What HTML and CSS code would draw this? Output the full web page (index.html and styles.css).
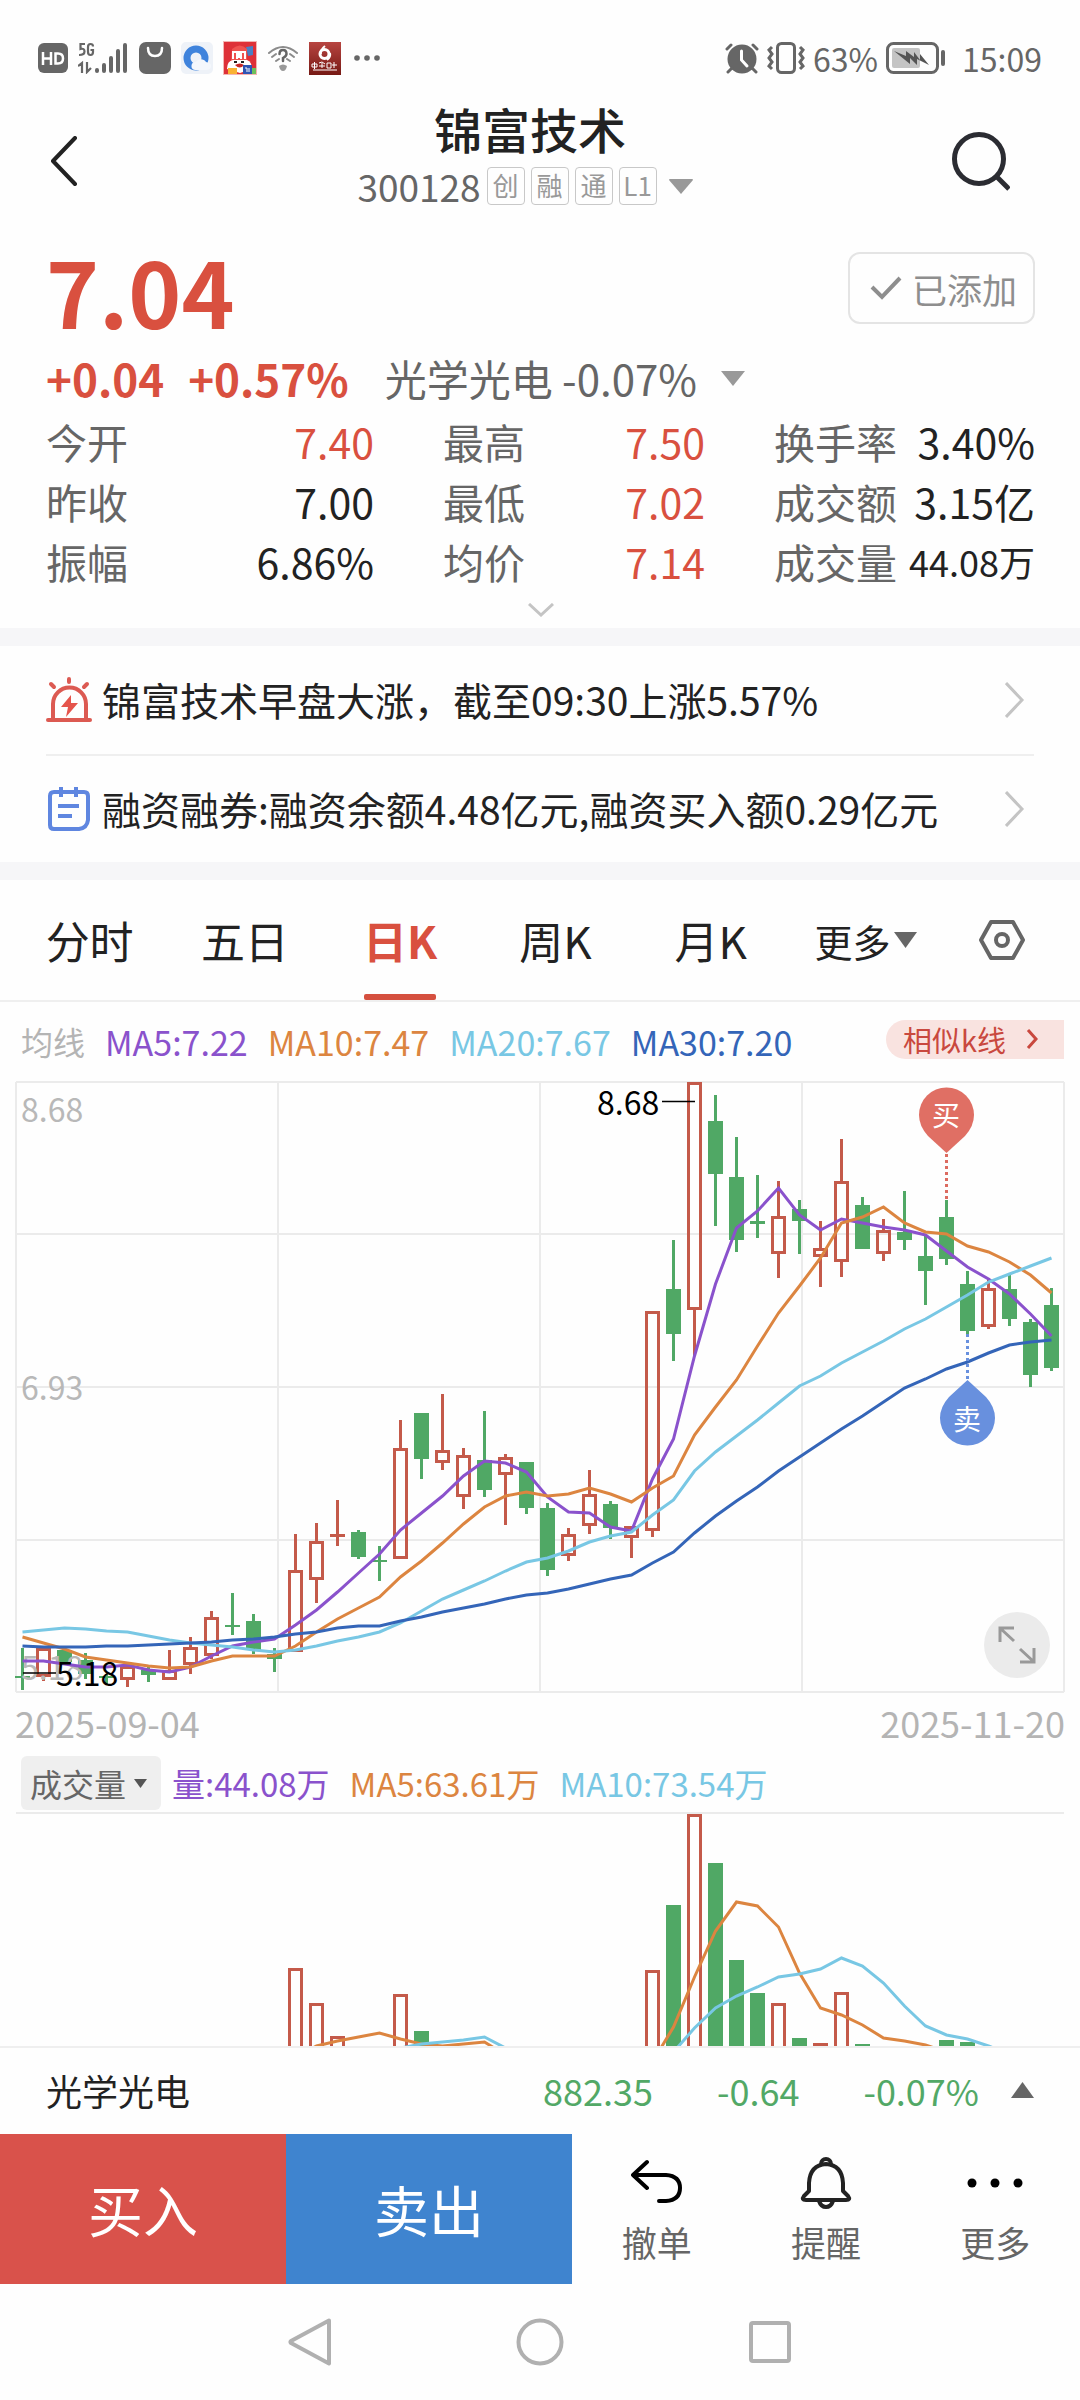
FILE: index.html
```html
<!DOCTYPE html>
<html lang="zh-CN">
<head>
  <meta charset="UTF-8" />
  <meta name="viewport" content="width=device-width, initial-scale=1.0"/>
  <title>锦富技术 300128</title>
  <link rel="stylesheet" href="styles.css">
</head>
<body>

  <div class="status-bar">
    <div class="status-left">
      <svg width="30" height="30" viewBox="0 0 30 30"><rect width="30" height="30" rx="6" fill="#666"/><path d="M5 9v13M13 9v13M5 15.500h8M17.500 10.500v10h2.500q5 0 5-5t-5-5z" fill="none" stroke="#fff" stroke-width="2.500"/></svg>
      <svg width="51" height="32" viewBox="0 0 51 32"><g fill="none" stroke="#666" stroke-width="2.200"><path d="M7 2H2.500v5q4-1 4 2.500T1 13M15 4.500q0-2.500-2.500-2.500T10 5v5q0 3 2.500 3t2.500-3V8h-2.500M0 24l4-3v10M9 20v10l4-4"/></g><g stroke="#666" stroke-width="4" stroke-linecap="round"><path d="M19 28v1M26 23v6M33 16v13M40 9v20M47 3v26"/></g></svg>
      <svg width="32" height="32" viewBox="0 0 32 32"><rect width="32" height="32" rx="7" fill="#666"/><path d="M9 6q0 8 7 8t7-8" fill="none" stroke="#fff" stroke-width="2.500" stroke-linecap="round"/></svg>
      <svg width="32" height="32" viewBox="0 0 32 32"><rect width="32" height="32" rx="5" fill="#eef2f8"/><circle cx="15" cy="16" r="9" fill="none" stroke="#3f83dc" stroke-width="7"/><path d="M14 28a4 4 0 0 1 1-8 6 6 0 0 1 10 0q6 1 5 5-1 3-5 3z" fill="#f4f7fc"/></svg>
      <svg width="34" height="34" viewBox="0 0 34 34"><rect width="34" height="34" fill="#f3b6b3"/><rect x="1" y="1" width="32" height="32" fill="#de3138"/><path d="M23 6l7-1v9l-5 1z" fill="#4a7fc4"/><path d="M9 8q8-7 15 0v12H8z" fill="#ef5350"/><path d="M10 18v-7h4v7M16 10v7M18 18v-7h4v7" fill="none" stroke="#fff" stroke-width="2"/><path d="M4 28q0-8 6-9h14q5 2 5 9l-12 4z" fill="#fff"/><path d="M12 24q5-3 9 0-4 5-9 0z" fill="#c62828"/><path d="M11 21h3M18 21h3" stroke="#222" stroke-width="2"/><rect x="5" y="27" width="9" height="6" fill="#f9b233"/><rect x="20" y="24" width="9" height="9" fill="#2f55b5"/><rect x="29" y="27" width="4" height="6" fill="#6cc15c"/><path d="M22 27h2v4M26 27v4" stroke="#fff" fill="none"/></svg>
      <svg width="32" height="26" viewBox="0 0 32 26"><g fill="none" stroke="#8b8b8b" stroke-width="2" stroke-linecap="round"><path d="M2 8Q16-4 30 8M5 12l4-3M27 12l-4-3M9 16l3-2M23 16l-3-2"/><path d="M12.500 9q0-4 3.500-4t3.500 4q0 2-3.500 4v3" stroke="#666" stroke-width="2.500"/></g><path d="M12 21q4-3 8 0-1 5-4 5t-4-5z" fill="#999"/></svg>
      <svg width="32" height="33" viewBox="0 0 32 33"><defs><linearGradient id="app" x2="0" y2="1"><stop stop-color="#b84541"/><stop offset="1" stop-color="#761914"/></linearGradient></defs><rect width="32" height="33" fill="url(#app)"/><circle cx="15.500" cy="12" r="4.500" fill="none" stroke="#fff" stroke-width="3"/><path d="M16 4q-5 4-4 8M18 18q4-3 3-7" stroke="#fff" stroke-width="2" fill="none"/><path d="M3 22h5v3H3zM5.500 20v7M10 21l3-1 3 2M10 24h6M13 21v5M18 21h4v5h-4zM25 20v6M23 23h5M4 28h24" fill="none" stroke="#fff"/></svg>
      <svg class="dots" width="26" height="6" viewBox="0 0 26 6"><g fill="#666"><circle cx="3" cy="3" r="2.800"/><circle cx="13" cy="3" r="2.800"/><circle cx="23" cy="3" r="2.800"/></g></svg>
    </div>
    <div class="status-right">
      <svg width="34" height="32" viewBox="0 0 34 32"><circle cx="17" cy="17" r="14.500" fill="#666"/><path d="M2 7l4-4M32 7l-4-4M3 30l4-4M31 30l-4-4" stroke="#666" stroke-width="3" stroke-linecap="round"/><path d="M16.500 9v9l5.500 6" fill="none" stroke="#fff" stroke-width="3" stroke-linecap="round"/></svg>
      <svg width="38" height="32" viewBox="0 0 38 32"><g fill="none" stroke="#666" stroke-width="3"><rect x="10.500" y="1.500" width="17" height="29" rx="4"/><path d="M5 5l-3 3 3 4-3 4 3 4-3 4 3 3M33 5l3 3-3 4 3 4-3 4 3 4-3 3"/></g></svg>
      <span>63%</span>
      <svg width="60" height="32" viewBox="0 0 60 32"><rect x="1.500" y="1.500" width="50" height="29" rx="6" fill="none" stroke="#666" stroke-width="3"/><rect x="6" y="6" width="28" height="20" rx="2" fill="#c4c4c4"/><path d="M8 9l12 5v-5l8 6v-5l6 8v-6l9 11-12-6v6l-7-7v6z" fill="#555"/><rect x="55" y="8" width="4" height="16" rx="2" fill="#666"/></svg>
      <time class="clock">15:09</time>
    </div>
  </div>

  <header class="header">
    <button class="icon-btn" aria-label="返回">
      <svg width="28" height="50" viewBox="0 0 28 50"><path d="M25 2L3 25l22 23" fill="none" stroke="#222" stroke-width="4" stroke-linecap="round" stroke-linejoin="round"/></svg>
    </button>
    <div class="header-title">
      <h1>锦富技术</h1>
      <div class="code-row">
        <span class="code">300128</span>
        <span class="badge">创</span>
        <span class="badge">融</span>
        <span class="badge">通</span>
        <span class="badge">L1</span>
        <svg class="code-arrow" width="24" height="15" viewBox="0 0 24 15"><path d="M0 1q0-1 1-1h22q1 0 1 1L12 15z" fill="#999"/></svg>
      </div>
    </div>
    <button class="icon-btn search" aria-label="搜索">
      <svg width="58" height="60" viewBox="0 0 58 60"><circle cx="27" cy="28" r="24.500" fill="none" stroke="#2b2c32" stroke-width="5"/><path d="M44 45l13 13" stroke="#2b2c32" stroke-width="5"/></svg>
    </button>
  </header>

  <section class="quote">
    <div class="price-row">
      <strong class="price">7.04</strong>
      <button class="added"><svg width="32" height="24" viewBox="0 0 32 24"><path d="M2 11l10 10L30 2" fill="none" stroke="#8e8e8e" stroke-width="4"/></svg>已添加</button>
    </div>
    <div class="change-row">
      <strong>+0.04</strong>
      <strong>+0.57%</strong>
      <a href="#sector">光学光电 <span>-0.07%</span></a>
      <svg width="24" height="15" viewBox="0 0 24 15"><path d="M0 0h24L12 15z" fill="#999"/></svg>
    </div>
    <dl class="stats">
      <div><dt>今开</dt><dd class="up">7.40</dd></div>
      <div><dt>最高</dt><dd class="up">7.50</dd></div>
      <div><dt>换手率</dt><dd>3.40%</dd></div>
      <div><dt>昨收</dt><dd>7.00</dd></div>
      <div><dt>最低</dt><dd class="up">7.02</dd></div>
      <div><dt>成交额</dt><dd>3.15亿</dd></div>
      <div><dt>振幅</dt><dd>6.86%</dd></div>
      <div><dt>均价</dt><dd class="up">7.14</dd></div>
      <div><dt>成交量</dt><dd class="small">44.08万</dd></div>
    </dl>
    <button class="expand" aria-label="展开"><svg width="26" height="14" viewBox="0 0 26 14"><path d="M1 1l12 11L25 1" fill="none" stroke="#c4c4c4" stroke-width="3"/></svg></button>
  </section>

  <section class="news">
    <a class="news-item" href="#">
      <svg width="46" height="46" viewBox="0 0 46 46"><g fill="none" stroke="#dc5a52" stroke-width="4" stroke-linecap="round"><path d="M2 43h42"/><path d="M7 43V27a16.500 16.500 0 0 1 33 0v16"/><path d="M23 2v3M5 7l3 3M41 7l-3 3"/></g><path d="M25 18l-10 12h7l-2 10 12-14h-7z" fill="#e5544b"/></svg>
      <span>锦富技术早盘大涨，截至09:30上涨5.57%</span>
      <svg class="go" width="20" height="36" viewBox="0 0 20 36"><path d="M1 1l16 17L1 35" fill="none" stroke="#c4c4c4" stroke-width="3"/></svg>
    </a>
    <a class="news-item" href="#">
      <svg width="46" height="46" viewBox="0 0 46 46"><g fill="none" stroke="#5f86e0" stroke-width="4"><path d="M8 6h30q4 0 4 4v24q-1 8-9 9H8q-4 0-4-4V10q0-4 4-4zM15 1v10M30 1v10M12 20h21M12 30h14"/></g></svg>
      <span>融资融券:融资余额4.48亿元,融资买入额0.29亿元</span>
      <svg class="go" width="20" height="36" viewBox="0 0 20 36"><path d="M1 1l16 17L1 35" fill="none" stroke="#c4c4c4" stroke-width="3"/></svg>
    </a>
  </section>

  <nav class="tabs">
    <button>分时</button>
    <button>五日</button>
    <button class="active">日K</button>
    <button>周K</button>
    <button>月K</button>
    <button class="more">更多<svg width="23" height="16" viewBox="0 0 23 16"><path d="M0 0h23L11.500 16z" fill="#666"/></svg></button>
    <button aria-label="设置"><svg width="48" height="42" viewBox="0 0 48 42"><g fill="none" stroke="#666" stroke-width="4"><path d="M13 3h22l10 18-10 18H13L3 21z" stroke-linejoin="round"/><circle cx="24" cy="21" r="6"/></g></svg></button>
  </nav>

  <div class="legend">
    <span class="ma-name">均线</span>
    <span class="ma5">MA5:7.22</span>
    <span class="ma10">MA10:7.47</span>
    <span class="ma20">MA20:7.67</span>
    <span class="ma30">MA30:7.20</span>
    <a class="similar" href="#">相似k线<svg width="12" height="22" viewBox="0 0 12 22"><path d="M2 2l8 9-8 9" fill="none" stroke="#c9483e" stroke-width="3"/></svg></a>
  </div>

  <div class="chart">
    <svg id="kline" viewBox="0 0 1080 614"></svg>
    <button class="fullscreen" aria-label="全屏"><svg width="38" height="38" viewBox="0 0 38 38"><path d="M2 16V2h14M3 3l13 12M22 36h14V22M35 35L22 23" fill="none" stroke="#999" stroke-width="3"/></svg></button>
  </div>
  <div class="dates"><time>2025-09-04</time><time>2025-11-20</time></div>

  <div class="legend volume-legend">
    <label class="indicator">
      <select aria-label="指标"><option>成交量</option></select>
      <svg width="13" height="9" viewBox="0 0 13 9"><path d="M0 0h13L6.500 9z" fill="#555"/></svg>
    </label>
    <span class="ma5">量:44.08万</span>
    <span class="ma10">MA5:63.61万</span>
    <span class="ma20">MA10:73.54万</span>
  </div>
  <svg id="volume" class="volume" viewBox="0 0 1080 234"></svg>

  <footer class="footer">
    <div class="sector" id="sector">
      <span class="sector-name">光学光电</span>
      <span>882.35</span>
      <span>-0.64</span>
      <span>-0.07%</span>
      <svg width="23" height="16" viewBox="0 0 23 16"><path d="M11.500 0L23 16H0z" fill="#666"/></svg>
    </div>
    <div class="actions">
      <button class="buy">买入</button>
      <button class="sell">卖出</button>
      <div class="tools">
        <button>
          <svg width="52" height="54" viewBox="0 0 52 54"><path d="M16 6L2 19l14 13M3 19h32q14 1 14 13t-14 13h-7" fill="none" stroke="#000" stroke-width="4" stroke-linecap="round" stroke-linejoin="round"/></svg>
          撤单
        </button>
        <button>
          <svg width="52" height="54" viewBox="0 0 52 54"><g fill="none" stroke="#222" stroke-width="4" stroke-linejoin="round"><path d="M21 8a5 5 0 1 1 10 0"/><path d="M9 35V27Q10 9 26 8q16 1 17 19v8l5 5q3 4-2 4H6q-5 0-2-4z"/><path d="M19 45q2 6 7 6t7-6"/></g></svg>
          提醒
        </button>
        <button>
          <svg width="56" height="54" viewBox="0 0 56 54"><circle cx="5" cy="27" r="4.500"/><circle cx="28" cy="27" r="4.500"/><circle cx="51" cy="27" r="4.500"/></svg>
          更多
        </button>
      </div>
    </div>
  </footer>

  <div class="system-nav">
    <button aria-label="返回"><svg width="46" height="48" viewBox="0 0 46 48"><path d="M42 2.500L4 23q-1 1 0 2l38 20.500z" fill="none" stroke="#b0b0b0" stroke-width="4" stroke-linejoin="round"/></svg></button>
    <button aria-label="主页"><svg width="48" height="48" viewBox="0 0 48 48"><circle cx="24" cy="24" r="21.500" fill="none" stroke="#b0b0b0" stroke-width="4"/></svg></button>
    <button aria-label="最近"><svg width="44" height="44" viewBox="0 0 44 44"><rect x="3" y="3" width="38" height="38" rx="2" fill="none" stroke="#b0b0b0" stroke-width="4"/></svg></button>
  </div>

  <script src="chart.js"></script>
</body>
</html>
```

FILE: styles.css
```css
* {
  box-sizing: border-box;
}
body {
  margin: 0;
  font-family: "Noto Sans CJK SC", "Noto Sans", sans-serif;
  background: #fefefe;
  color: #222;
}
button, select {
  font: inherit;
  color: inherit;
  background: none;
  border: none;
  padding: 0;
  cursor: pointer;
}
a {
  color: inherit;
  text-decoration: none;
}
svg {
  display: block;
  flex-shrink: 0;
}

/* status bar */
.status-bar {
  display: flex;
  justify-content: space-between;
  height: 100px;
  padding: 16px 38px 0;
  color: #666;
  font-size: 32px;
}
.status-left, .status-right {
  display: flex;
  align-items: center;
  gap: 10px;
}
.status-right {
  gap: 8px;
}
.dots {
  margin-left: 3px;
}
.clock {
  margin-left: 8px;
}

/* header */
.header {
  display: grid;
  grid-template-columns: 80px 1fr 80px;
  align-items: center;
  padding: 0 70px 0 50px;
}
.icon-btn {
  display: flex;
  padding-top: 16px;
}
.search {
  justify-content: flex-end;
}
.header-title {
  text-align: center;
}
.header h1 {
  margin: 0 0 10px;
  font-size: 48px;
  font-weight: 500;
  line-height: 56px;
}
.code-row {
  display: flex;
  justify-content: center;
  align-items: center;
  gap: 6px;
  height: 40px;
  padding-right: 10px;
  color: #666;
}
.code {
  font-size: 37px;
  line-height: 36px;
}
.badge {
  width: 38px;
  height: 38px;
  border: 1px solid #c8c8c8;
  border-radius: 4px;
  color: #999;
  font-size: 26px;
  line-height: 34px;
}
.code-arrow {
  margin-left: 6px;
}

/* quote */
.quote {
  padding: 46px 45px 6px 46px;
}
.price-row {
  display: flex;
  justify-content: space-between;
  align-items: flex-start;
  color: #d9503f;
}
.price {
  font-size: 90px;
  line-height: 76px;
}
.added {
  display: flex;
  align-items: center;
  gap: 10px;
  height: 72px;
  padding: 0 16px 0 20px;
  border: 2px solid #e4e4e4;
  border-radius: 12px;
  color: #8e8e8e;
  font-size: 35px;
}
.change-row {
  display: flex;
  align-items: center;
  gap: 24px;
  margin-top: 20px;
  line-height: 60px;
  font-size: 42px;
  color: #666;
}
.change-row strong {
  color: #d9503f;
  font-size: 44px;
}
.change-row a {
  margin-left: 12px;
}
.stats {
  display: grid;
  grid-template-columns: 328fr 262fr 261fr;
  column-gap: 69px;
  margin: 3px 0 0;
  font-size: 41px;
  line-height: 60px;
}
.stats div {
  display: flex;
  justify-content: space-between;
  white-space: nowrap;
}
.stats dt {
  color: #666;
}
.stats dd {
  margin: 0;
}
.stats .up {
  color: #d9503f;
}
.stats .small {
  font-size: 36px;
}
.expand {
  display: flex;
  justify-content: center;
  width: 100%;
  padding: 12px 0 5px;
}

/* news */
.news {
  border: solid #f6f6f8;
  border-width: 18px 0;
  padding: 0 46px;
}
.news-item {
  display: flex;
  align-items: center;
  gap: 10px;
  height: 108px;
  font-size: 39px;
}
.news-item span {
  padding-bottom: 3px;
}
.news-item + .news-item {
  border-top: 2px solid #efefef;
}
.go {
  margin-left: auto;
  margin-right: 9px;
}

/* period tabs */
.tabs {
  display: grid;
  grid-template-columns: repeat(6, 4fr) 3fr;
  padding: 0 20px 0 12px;
  height: 122px;
  border-bottom: 2px solid #efefef;
}
.tabs button {
  display: flex;
  align-items: center;
  justify-content: center;
  font-size: 44px;
}
.tabs .active {
  position: relative;
  color: #d9503f;
  font-weight: bold;
}
.tabs .active::after {
  content: "";
  position: absolute;
  bottom: 0;
  width: 72px;
  height: 6px;
  border-radius: 2px;
  background: #d5503f;
}
.tabs .more {
  gap: 4px;
  font-size: 38px;
}

/* chart */
.legend {
  display: flex;
  align-items: center;
  gap: 20px;
  height: 78px;
  padding: 0 16px 0 21px;
  font-size: 34px;
  white-space: nowrap;
}
.ma-name {
  color: #b4b4b4;
  font-size: 32px;
}
.ma5 {
  color: #8a52cc;
}
.ma10 {
  color: #dc8540;
}
.ma20 {
  color: #78c7e4;
}
.ma30 {
  color: #3465b8;
}
.similar {
  display: flex;
  align-items: center;
  gap: 20px;
  height: 39px;
  margin: 0 0 4px auto;
  padding: 0 26px 0 17px;
  border-radius: 20px 0 0 20px;
  background: #f9e3e0;
  color: #c9483e;
  font-size: 29px;
}
.chart {
  position: relative;
}
.chart > svg, .volume {
  width: 100%;
  height: auto;
}
.chart text {
  font-size: 32px;
}
.chart .scale {
  fill: #b8b8b8;
}
.chart .pin {
  fill: #fff;
  font-size: 28px;
  text-anchor: middle;
}
.fullscreen {
  position: absolute;
  right: 30px;
  bottom: 16px;
  display: flex;
  align-items: center;
  justify-content: center;
  width: 66px;
  height: 66px;
  border-radius: 50%;
  background: #ebebeb;
}
.dates {
  display: flex;
  justify-content: space-between;
  height: 60px;
  padding: 0 15px;
  color: #b4b4b4;
  font-size: 36px;
  line-height: 57px;
}
.volume-legend {
  height: 58px;
  font-size: 33px;
}
.volume-legend span:nth-of-type(1) {
  margin-left: -9px;
}
.indicator {
  display: flex;
  align-items: center;
  gap: 7px;
  height: 54px;
  padding: 0 14px 0 9px;
  border-radius: 6px;
  background: #efefef;
  color: #666;
  font-size: 32px;
}
.indicator select {
  appearance: none;
}

/* bottom bars */
.footer {
  border-top: 2px solid #efefef;
}
.sector {
  display: flex;
  align-items: center;
  height: 86px;
  padding: 0 46px 2px;
  color: #52a866;
  font-size: 36px;
}
.sector-name {
  margin-right: auto;
  color: #222;
}
.sector span + span {
  margin-right: 64px;
}
.sector span:last-of-type {
  margin-right: 32px;
}
.actions {
  display: grid;
  grid-template-columns: 286fr 286fr 508fr;
  height: 150px;
}
.buy, .sell {
  padding-bottom: 3px;
  color: #fff;
  font-size: 55px;
}
.buy {
  background: #d9524b;
}
.sell {
  background: #3f84cf;
}
.tools {
  display: grid;
  grid-template-columns: repeat(3, 1fr);
}
.tools button {
  display: flex;
  flex-direction: column;
  align-items: center;
  justify-content: center;
  gap: 6px;
  padding-top: 5px;
  color: #666;
  font-size: 35px;
  line-height: 52px;
}
.system-nav {
  display: grid;
  grid-template-columns: repeat(3, 1fr);
  height: 116px;
  padding: 0 18%;
}
.system-nav button {
  display: flex;
  align-items: center;
  justify-content: center;
}
```

FILE: chart.js
```javascript
const RED = '#c45a4a';
const GREEN = '#50a865';
const COLORS = { ma5: '#8a52cc', ma10: '#dc8540', ma20: '#78c7e4', ma30: '#3465b8' };

// [up, high, body top, body bottom, low]
const candles = [
  [0,568,596,598,610],[1,568,568,597,601],[0,570,570,582,584],[0,573,580,594,599],[0,594,596,598,605],
  [1,586,586,600,607],[0,586,590,595,602],[1,570,590,600,600],[1,557,567,585,594],[1,531,537,576,579],
  [0,513,545,547,555],[0,534,541,570,574],[0,568,574,579,592],[1,454,490,572,572],[1,443,461,500,523],
  [1,420,455,457,466],[0,450,452,477,479],[0,466,480,482,501],[1,340,368,479,479],[0,333,333,379,399],
  [1,314,370,383,390],[1,368,375,417,429],[0,331,380,410,417],[1,374,377,395,445],[0,382,382,428,434],
  [0,423,428,490,496],[1,448,454,476,481],[1,390,414,446,454],[0,421,424,448,459],[1,446,446,458,478],
  [1,231,231,451,457],[0,160,209,254,281],[1,2,2,230,276],[0,15,41,94,146],[0,57,97,160,172],
  [0,95,141,144,158],[1,101,136,174,198],[0,120,129,141,174],[1,141,168,177,207],[1,59,101,182,197],
  [0,117,125,169,169],[1,139,150,174,181],[0,111,152,160,170],[0,155,176,191,225],[0,120,137,179,185],
  [0,191,204,251,255],[1,198,208,247,249],[0,194,209,239,246],[0,239,242,295,307],[0,208,225,288,291]
];

const lines = {
  ma5: [581,581,584,587,587,585,590,592,587,576,566,562,559,545,530,512,493,474,450,433,416,396,381,383,392,417,432,433,447,451,399,359,276,204,148,131,108,135,150,139,143,147,150,155,171,187,199,214,234,256],
  ma10: [557,563,569,577,580,583,586,588,587,581,576,576,576,566,552,539,528,517,497,481,463,444,427,416,412,416,414,408,414,422,408,396,355,327,300,266,233,206,178,143,137,127,143,152,154,166,172,182,195,213],
  ma20: [552,550,548,549,551,552,556,560,563,565,567,570,572,570,566,561,557,552,543,531,519,510,501,491,482,478,471,462,456,452,435,420,391,372,356,340,323,306,296,283,272,261,249,239,227,215,202,194,186,178],
  ma30: [566,567,567,567,566,566,565,564,563,562,560,559,557,554,552,548,546,546,541,537,532,528,524,519,515,513,509,504,499,495,483,472,453,436,421,407,391,377,363,349,336,322,308,299,289,282,273,265,262,260]
};

// index: top of the bar, the rest is below the visible area
const volumes = { 13:156, 14:191, 15:224, 18:182, 19:219, 30:158, 31:93, 32:2, 33:51, 34:148, 35:181, 36:191, 37:226, 38:231, 39:180, 40:232, 44:228, 45:230 };
const volumeLines = {
  ma5: { 13:245, 14:234, 15:229, 16:225, 17:221, 18:227, 19:232, 20:234, 21:232, 22:230, 23:243, 24:260, 29:270, 30:250, 31:215, 32:165, 33:119, 34:90, 35:94, 36:115, 37:161, 38:196, 39:203, 40:213, 41:226, 42:229, 43:233, 44:240 },
  ma10: { 17:242, 18:236, 19:232, 20:230, 21:228, 22:225, 23:236, 24:255, 30:265, 31:240, 32:216, 33:196, 34:184, 35:175, 36:165, 37:162, 38:157, 39:146, 40:154, 41:171, 42:194, 43:214, 44:223, 45:227, 46:234, 47:242 }
};

const x = i => 22.5 + i * 21;

function bar(i, up, top, bottom) {
  if (!up) return `<rect x="${x(i) - 7.5}" y="${top}" width="15" height="${bottom - top}" fill="${GREEN}"/>`;
  if (bottom - top < 4) return `<rect x="${x(i) - 7.5}" y="${top - 1}" width="15" height="3" fill="${RED}"/>`;
  return `<rect x="${x(i) - 6}" y="${top + 1.5}" width="12" height="${bottom - top - 3}" fill="none" stroke="${RED}" stroke-width="3"/>`;
}

function polyline(points, color) {
  return `<polyline points="${points.join(' ')}" fill="none" stroke="${color}" stroke-width="3"/>`;
}

function drawKline() {
  let out = '<g stroke="#ebebeb" stroke-width="2">';
  [2, 154, 307, 460, 612].forEach(y => out += `<path d="M16 ${y}H1064"/>`);
  [16, 278, 540, 802, 1064].forEach(v => out += `<path d="M${v} 2V612"/>`);
  out += '</g>';
  candles.forEach(([up, high, top, bottom, low], i) => {
    const color = up ? RED : GREEN;
    out += `<path d="M${x(i)} ${high}V${top}M${x(i)} ${bottom}V${low}" stroke="${color}" stroke-width="3"/>`;
    out += bar(i, up, top, bottom);
  });
  out += '<text class="scale" x="21" y="42">8.68</text><text class="scale" x="21" y="320">6.93</text><text class="scale" x="21" y="600">5.18</text>';
  for (const name in lines) {
    out += polyline(lines[name].map((y, i) => `${x(i)},${y}`), COLORS[name]);
  }
  out += '<path d="M662 21.500H695M23 593H56" stroke="#000" stroke-width="1.500"/>';
  out += '<text x="597" y="35">8.68</text><text x="56" y="606">5.18</text>';
  // trade marks
  out += '<path d="M946.500 74V120" stroke="#dc6b60" stroke-width="3" stroke-dasharray="3 3"/>';
  out += '<path d="M967.500 254V302" stroke="#6890de" stroke-width="3" stroke-dasharray="3 3"/>';
  out += '<path d="M946.500 73L928 56Q919 46 919 35a27.500 27.500 0 0 1 55 0q0 11-9 21z" fill="#e06f64"/>';
  out += '<path d="M967.500 300L949 317Q940 327 940 338a27.500 27.500 0 0 0 55 0q0-11-9-21z" fill="#6890de"/>';
  out += '<text class="pin" x="946" y="46">买</text><text class="pin" x="967" y="350">卖</text>';
  document.getElementById('kline').innerHTML = out;
}

function drawVolume() {
  let out = '<path d="M16 1H1064" stroke="#ebebeb" stroke-width="2"/>';
  for (const i in volumes) out += bar(+i, candles[i][0], volumes[i], 300);
  for (const name in volumeLines) {
    out += polyline(Object.entries(volumeLines[name]).map(([i, y]) => `${x(+i)},${y}`), COLORS[name === 'ma5' ? 'ma10' : 'ma20']);
  }
  document.getElementById('volume').innerHTML = out;
}

drawKline();
drawVolume();
```
